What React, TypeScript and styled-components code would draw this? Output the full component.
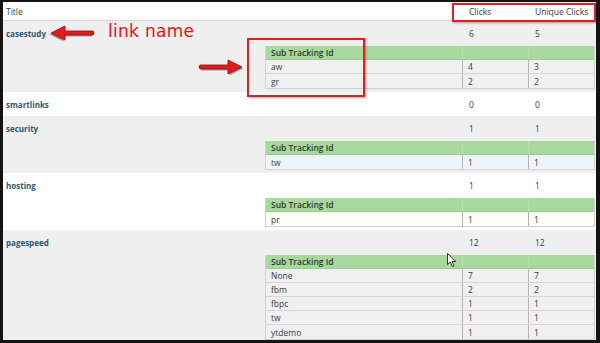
import styled, { createGlobalStyle } from "styled-components";

const GlobalStyle = createGlobalStyle`
  html, body {
    margin: 0;
    padding: 0;
    background: #141414;
  }
  body {
    font-family: "Open Sans", "Liberation Sans", sans-serif;
  }
`;

const Frame = styled.div`
  width: 600px;
  height: 343px;
  box-sizing: border-box;
  padding: 2px 4px 3px 3px;
`;

const Page = styled.div`
  position: relative;
  height: 100%;
  background: #efefef;
  overflow: hidden;
  font-size: 8.5px;
  color: #3a3a3a;
`;

const HeaderRow = styled.div`
  display: grid;
  grid-template-columns: 1fr 66px 67px;
  height: 18px;
  align-items: center;
  background: #fff;
  border-bottom: 1px solid #d8d8d8;
  & > span:first-child {
    padding-left: 3px;
  }
  & > span {
    padding-left: 6px;
  }
`;

const LinkRow = styled.div<{ $alt?: boolean; $bare?: boolean }>`
  background: ${(p) => (p.$alt ? "#ffffff" : "#efefef")};
  padding: 5px 1px ${(p) => (p.$bare ? "5px" : "3px")} 0;
`;

const Summary = styled.div`
  display: grid;
  grid-template-columns: 1fr 66px 66px;
  height: 14px;
  align-items: center;
  & > span {
    padding-left: 6px;
  }
`;

const LinkName = styled.a`
  padding-left: 0 !important;
  margin-left: 3px;
  font-size: 8px;
  font-weight: 700;
  color: #2c5676;
  text-decoration: none;
`;

const SubTable = styled.div`
  margin: 6px 0 0 262px;
  border: 1px solid #d2d2d2;
  border-top: none;
`;

const SubRow = styled.div<{ $tone?: "head" | "gray" | "blue" | "cream" }>`
  display: grid;
  grid-template-columns: 1fr 66px 66px;
  height: 14px;
  box-sizing: border-box;
  align-items: center;
  background: ${(p) =>
    p.$tone === "head"
      ? "#a7d89e"
      : p.$tone === "blue"
      ? "#edf4fb"
      : p.$tone === "cream"
      ? "#fffef6"
      : "#f0f0f0"};
  border-bottom: 1px solid ${(p) => (p.$tone === "head" ? "#9ccd93" : "#d6d6d6")};
  font-weight: ${(p) => (p.$tone === "head" ? 600 : 400)};
  color: ${(p) => (p.$tone === "head" ? "#2e3b2c" : "#3a3a3a")};
  &:last-child {
    border-bottom: none;
  }
`;

const SubCell = styled.span<{ $divider?: boolean }>`
  height: 100%;
  display: flex;
  align-items: center;
  padding-left: 5px;
  border-left: ${(p) => (p.$divider ? "1px solid #b4b4b4" : "none")};
`;

const HeadDivider = styled.span`
  height: 100%;
  border-left: 1px solid #b9dfb2;
`;

const Callout = styled.div`
  position: absolute;
  border: 2px solid #e41e1e;
  box-shadow: 1px 1px 2px rgba(0, 0, 0, 0.35);
  pointer-events: none;
`;

const Note = styled.div`
  position: absolute;
  left: 105px;
  top: 19px;
  font-family: "DejaVu Sans", sans-serif;
  font-size: 17px;
  color: #f01010;
  letter-spacing: 0.3px;
`;

const Overlay = styled.svg`
  position: absolute;
  overflow: visible;
`;

type Sub = { id: string; clicks: number; unique: number };
type Link = { name: string; clicks: number; unique: number; tone: "gray" | "blue" | "cream"; subs: Sub[] };

const links: Link[] = [
  { name: "casestudy", clicks: 6, unique: 5, tone: "gray", subs: [{ id: "aw", clicks: 4, unique: 3 }, { id: "gr", clicks: 2, unique: 2 }] },
  { name: "smartlinks", clicks: 0, unique: 0, tone: "gray", subs: [] },
  { name: "security", clicks: 1, unique: 1, tone: "blue", subs: [{ id: "tw", clicks: 1, unique: 1 }] },
  { name: "hosting", clicks: 1, unique: 1, tone: "cream", subs: [{ id: "pr", clicks: 1, unique: 1 }] },
  {
    name: "pagespeed",
    clicks: 12,
    unique: 12,
    tone: "gray",
    subs: [
      { id: "None", clicks: 7, unique: 7 },
      { id: "fbm", clicks: 2, unique: 2 },
      { id: "fbpc", clicks: 1, unique: 1 },
      { id: "tw", clicks: 1, unique: 1 },
      { id: "ytdemo", clicks: 1, unique: 1 },
    ],
  },
];

function RedArrow({ x, y, dir }: { x: number; y: number; dir: "left" | "right" }) {
  // shaft with a rounded tail and a triangular head, drawn pointing right
  const shape = "M2 5 Q0 7 2 9 L30 9 L30 14 L44 7 L30 0 L30 5 Z";
  return (
    <Overlay style={{ left: x, top: y }} width="46" height="16" viewBox="0 0 46 16">
      <g transform={dir === "left" ? "translate(46 0) scale(-1 1)" : undefined}>
        <path d={shape} transform="translate(1.5 1.5)" fill="rgba(0,0,0,0.35)" />
        <path d={shape} fill="#e41b1b" stroke="#8a0c0c" strokeWidth="0.8" strokeLinejoin="round" />
      </g>
    </Overlay>
  );
}

function Pointer({ x, y }: { x: number; y: number }) {
  return (
    <Overlay style={{ left: x, top: y }} width="11" height="15" viewBox="0 0 11 15">
      <path d="M0.5 0.5 L0.5 11.5 L3.3 9 L5.3 13.5 L7 12.8 L5.1 8.5 L8.8 8.5 Z" fill="#fff" stroke="#222" strokeWidth="0.9" strokeLinejoin="round" />
    </Overlay>
  );
}

export default function App() {
  return (
    <Frame>
      <GlobalStyle />
      <Page>
        <HeaderRow>
          <span>Title</span>
          <span>Clicks</span>
          <span>Unique Clicks</span>
        </HeaderRow>
        {links.map((link, i) => (
          <LinkRow key={link.name} $alt={i % 2 === 1} $bare={link.subs.length === 0}>
            <Summary>
              <LinkName href="#">{link.name}</LinkName>
              <span>{link.clicks}</span>
              <span>{link.unique}</span>
            </Summary>
            {link.subs.length > 0 && (
              <SubTable>
                <SubRow $tone="head">
                  <SubCell>Sub Tracking Id</SubCell>
                  <HeadDivider />
                  <HeadDivider />
                </SubRow>
                {link.subs.map((s) => (
                  <SubRow key={s.id} $tone={link.tone}>
                    <SubCell>{s.id}</SubCell>
                    <SubCell $divider>{s.clicks}</SubCell>
                    <SubCell $divider>{s.unique}</SubCell>
                  </SubRow>
                ))}
              </SubTable>
            )}
          </LinkRow>
        ))}

        <Callout style={{ left: 449, top: 1, width: 140, height: 15 }} />
        <Callout style={{ left: 244, top: 36, width: 114, height: 55 }} />
        <RedArrow x={46} y={24} dir="left" />
        <Note>link name</Note>
        <RedArrow x={195} y={58} dir="right" />
        <Pointer x={444} y={251} />
      </Page>
    </Frame>
  );
}
